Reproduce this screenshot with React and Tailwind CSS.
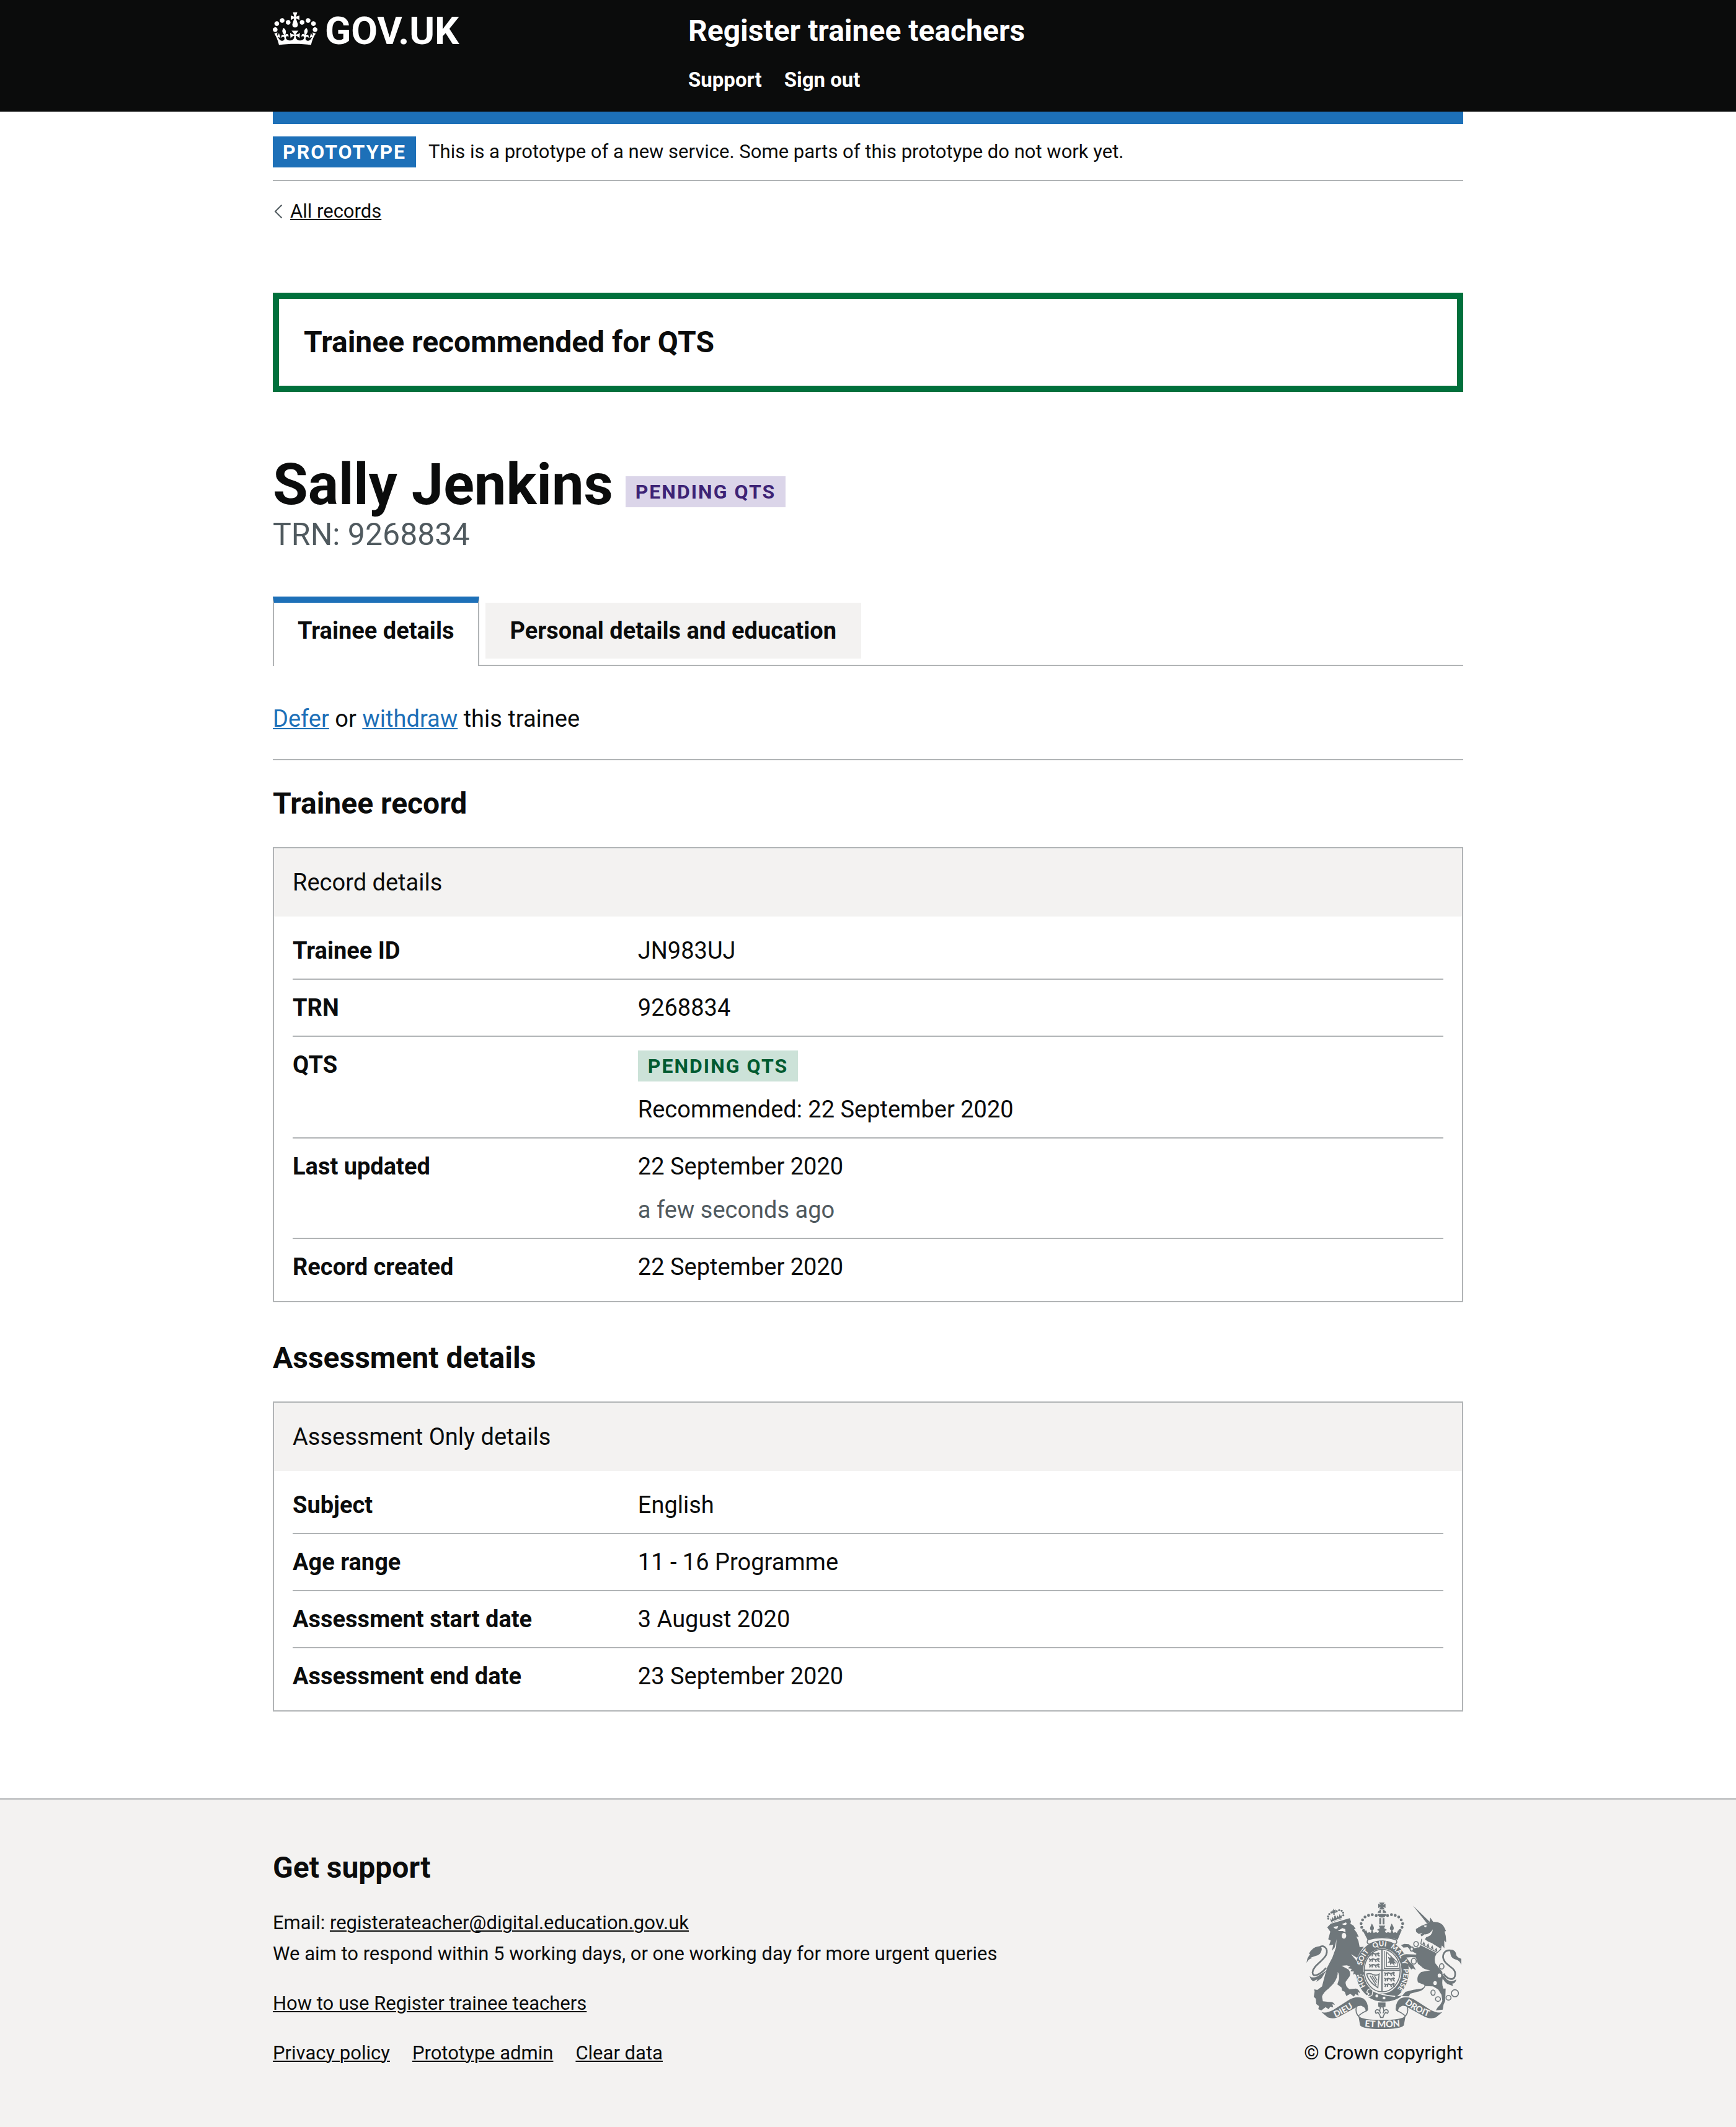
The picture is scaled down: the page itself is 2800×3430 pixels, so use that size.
const recordRows = [
  { key: "Trainee ID", value: "JN983UJ" },
  { key: "TRN", value: "9268834" },
  { key: "QTS", tag: "Pending QTS", note: "Recommended: 22 September 2020" },
  { key: "Last updated", value: "22 September 2020", hint: "a few seconds ago" },
  { key: "Record created", value: "22 September 2020" },
];

const assessmentRows = [
  { key: "Subject", value: "English" },
  { key: "Age range", value: "11 - 16 Programme" },
  { key: "Assessment start date", value: "3 August 2020" },
  { key: "Assessment end date", value: "23 September 2020" },
];

const underlined = "underline decoration-2 underline-offset-2";

function Container({ className = "", children }) {
  return <div className={`mx-auto w-full max-w-[1920px] ${className}`}>{children}</div>;
}

function CrownLogo() {
  return (
    <svg aria-hidden="true" viewBox="0 0 132 97" className="h-[53px] w-[72px] shrink-0" fill="currentColor" fillRule="evenodd">
      <path d="M25 30.2c3.5 1.5 7.7-.2 9.1-3.7 1.5-3.6-.2-7.8-3.9-9.2-3.6-1.4-7.6.3-9.1 3.9-1.4 3.5.3 7.5 3.9 9zM9 39.5c3.6 1.5 7.8-.2 9.2-3.7 1.5-3.6-.2-7.8-3.9-9.1-3.6-1.5-7.6.2-9.1 3.8-1.4 3.5.3 7.5 3.8 9zM4.4 57.2c3.5 1.5 7.7-.2 9.1-3.8 1.5-3.6-.2-7.7-3.9-9.1-3.5-1.5-7.6.3-9.1 3.8-1.4 3.5.3 7.6 3.9 9.1zm38.3-21.4c3.5 1.5 7.7-.2 9.1-3.8 1.5-3.6-.2-7.7-3.9-9.1-3.6-1.5-7.6.3-9.1 3.8-1.3 3.6.4 7.7 3.9 9.1zm64.4-5.6c-3.6 1.5-7.8-.2-9.1-3.7-1.5-3.6.2-7.8 3.8-9.2 3.6-1.4 7.7.3 9.2 3.9 1.3 3.5-.4 7.5-3.9 9zm15.9 9.3c-3.6 1.5-7.7-.2-9.1-3.7-1.5-3.6.2-7.8 3.7-9.1 3.6-1.5 7.7.2 9.2 3.8 1.5 3.5-.3 7.5-3.8 9zm4.7 17.7c-3.6 1.5-7.8-.2-9.2-3.8-1.5-3.6.2-7.7 3.9-9.1 3.6-1.5 7.7.3 9.2 3.8 1.3 3.5-.4 7.6-3.9 9.1zM89.3 35.8c-3.6 1.5-7.8-.2-9.2-3.8-1.4-3.6.2-7.7 3.9-9.1 3.6-1.5 7.7.3 9.2 3.8 1.4 3.6-.3 7.7-3.9 9.1zM69.7 17.7l8.9 4.7V9.3l-8.9 2.8c-.2-.3-.5-.6-.9-.9L72.4 0H59.6l3.5 11.2c-.3.3-.6.5-.9.9l-8.8-2.8v13.1l8.8-4.7c.3.3.6.7.9.9l-5 15.4v.1c-.2.8-.4 1.6-.4 2.4 0 4.1 3.1 7.5 7 8.1h.2c.3 0 .7.1 1 .1.4 0 .7 0 1-.1h.2c4-.6 7.1-4.1 7.1-8.1 0-.8-.1-1.7-.4-2.4V34l-5.1-15.4c.4-.2.7-.6 1-.9zM66 92.8c16.9 0 32.8 1.1 47.1 3.2 4-16.9 8.9-26.7 14-33.5l-9.6-3.4c1 4.9 1.1 7.2 0 10.2-1.5-1.4-3-4.3-4.2-8.7L108.6 76c2.8-2 5-3.2 7.5-3.3-4.4 9.4-10 11.9-13.6 11.2-4.3-.8-6.3-4.6-5.6-7.9 1-4.7 5.7-5.9 8-.5 4.3-8.7-3-11.4-7.6-8.8 7.1-7.2 7.9-13.5 2.1-21.1-8 6.1-8.1 12.3-4.5 20.8-4.7-5.4-12.1-2.5-9.5 6.2 3.4-5.2 7.9-2 7.2 3.1-.6 4.3-6.4 7.8-13.5 7.2-10.3-.9-10.9-8-11.2-13.8 2.5-.5 7.1 1.8 11 7.3L80.2 60c-4.1 4.4-8 5.3-12.3 5.4 1.4-4.4 8-11.6 8-11.6H55.5s6.4 7.2 7.9 11.6c-4.2-.1-8-1-12.3-5.4l1.4 16.4c3.9-5.5 8.5-7.7 10.9-7.3-.3 5.8-.9 12.8-11.1 13.8-7.2.6-12.9-2.9-13.5-7.2-.7-5 3.8-8.3 7.1-3.1 2.7-8.7-4.6-11.6-9.4-6.2 3.7-8.5 3.6-14.7-4.6-20.8-5.8 7.6-5 13.9 2.2 21.1-4.7-2.6-11.9.1-7.7 8.8 2.3-5.5 7.1-4.2 8.1.5.7 3.3-1.3 7.1-5.7 7.9-3.5.7-9-1.8-13.5-11.2 2.5.1 4.7 1.3 7.5 3.3l-4.7-15.4c-1.2 4.4-2.7 7.2-4.3 8.7-1.1-3-.9-5.3 0-10.2l-9.5 3.4c5 6.9 9.9 16.7 14 33.5 14.8-2.1 30.8-3.2 47.7-3.2z" />
    </svg>
  );
}

const INK = "#6f777b";
const PAPER = "#f3f2f1";

function PassantLions({ x, y }) {
  return (
    <g transform={`translate(${x} ${y})`} fill="none" stroke={INK} strokeWidth="6" strokeLinejoin="round">
      {[0, 27, 54].map((dy) => (
        <path key={dy} d={`M2 ${dy + 4}l6 8-4 8M8 ${dy + 10}l12-4 14 4 12-6 6 4M18 ${dy + 8}l-2 12M32 ${dy + 10}l4 11M46 ${dy + 6}l-2 8 8 6`} />
      ))}
    </g>
  );
}

function RoyalArms() {
  const archDots = [[470, 147], [451, 143], [433, 146], [416, 154], [404, 168], [397, 186], [400, 204], [409, 219]];
  const half = (
    <>
      <path d="M205 614Q228 622 262 604L330 560Q372 532 408 548Q432 566 430 600L420 614Q420 590 400 584Q382 582 372 592L302 630Q268 652 236 640Z" fill={INK} />
      <path d="M374 590Q366 618 390 640M404 584Q436 592 426 606Q400 618 384 632" fill="none" stroke={INK} strokeWidth="5" />
    </>
  );
  return (
    <svg role="img" aria-label="Royal coat of arms" viewBox="132 84 750 612" className="h-[204px] w-[250px]">
      <defs>
        <path id="garter" d="M500 537A102 121 0 0 1 500 295A102 121 0 0 1 500 537" />
        <path id="scroll" d="M400 682Q497 694 600 682" />
        <path id="scroll-left" d="M272 640Q325 618 385 574" />
        <path id="scroll-right" d="M608 573Q665 618 735 640" />
      </defs>

      {/* crown and orb */}
      <g fill={INK}>
        <path d="M484 84h27l-8 12 12-7v22l-12-7 8 14h-27l8-14-12 7v-22l12 7z" />
        <path d="M477 134a20 20 0 0 1 16-15v15zM502 119a20 20 0 0 1 17 15h-17zM476 139h44q-4 18-22 18t-22-18z" />
        <path d="M485 160h9v30h-9zM501 160h9v30h-9z" />
        {archDots.map(([x, y]) => (
          <g key={x}>
            <circle cx={x} cy={y} r="7" />
            <circle cx={995 - x} cy={y} r="7" />
          </g>
        ))}
        <path d="M408 226l14-8 6 14q10-8 16 0l4-14q-12-2-6-16l7-17 9 17q4 14-6 16l6 14q10-8 20 0l6-10-10-6 14-8-6-12h32l-6 12 14 8-10 6 6 10q10-8 20 0l6-14q-12-2-6-16l7-17 9 17q4 14-6 16l6 14q8-8 16 0l6-14 14 8-16 38q-74-22-146 0z" />
      </g>
      <path d="M430 264Q420 280 436 286Q498 258 560 286Q576 280 566 264Q498 244 430 264Z" fill={PAPER} stroke={INK} strokeWidth="5" />

      {/* lion */}
      <g fill={INK}>
        <path d="M233 204L250 187L342 160L348 176L345 187L360 196L371 213L363 213L376 230L386 251L374 248L384 270L390 300L410 298L392 325L378 352L348 334L372 362L388 385L402 400L410 425L402 440L396 430L390 443L382 432L374 440L368 428L358 433L362 418L345 417L352 405L332 402L344 394L328 388L302 390L336 408Q348 424 342 440L322 468Q320 490 340 503L372 500Q390 505 390 522L380 515L385 535L370 527L362 539L345 526L325 536L318 516L305 510L302 495L282 480L290 455Q292 430 284 420Q286 445 262 478L240 500Q212 520 208 540L212 562L240 565Q265 562 270 580L258 575L262 592L248 588L240 600L225 590L205 606L190 600L193 585L180 575L178 550L168 540L172 515L170 504L185 507L208 490Q218 450 232 400L258 350L276 300L278 262L270 300L256 318L262 288L242 292L250 268L238 262L248 225Z" />
        <path d="M133 376Q135 350 150 335L145 331Q160 300 190 296Q212 296 205 318Q200 338 178 342L150 352L162 352Q142 357 133 376Z" />
        <path d="M148 440Q160 452 185 442L228 414L206 450L180 468L186 455L165 465Q152 457 148 440Z" />
        <path d="M254 184L246 160l8 8 4-14 7 10 2-16h6l5 12 4-14 8 10 2-16 8 10 4-8-2 24q-26 4-46 18z" />
        {[[238, 162], [237, 151], [243, 140], [253, 132], [279, 126], [291, 121], [303, 124], [310, 133], [311, 146]].map(([x, y]) => (
          <circle key={`${x}-${y}`} cx={x} cy={y} r="5" />
        ))}
        <path d="M262 113l6 8 8-3-4 8 6 6-9 2v10h-6l-1-9-8 2 4-8-4-6 8-1z" />
      </g>
      <path d="M192 302C215 285 240 305 228 337C215 367 165 388 162 422C162 446 192 440 228 400" fill="none" stroke={INK} strokeWidth="8" />
      <path d="M250 182Q282 164 320 158" fill="none" stroke={PAPER} strokeWidth="4" />
      <g fill={PAPER}>
        <path d="M262 202l24-4-4 12q-12 4-20-8zM304 188l20-8 4 8q-10 10-24 0z" />
        <path d="M284 222l22-14 14 4 2 16-14-6z" />
        <ellipse cx="314" cy="245" rx="11" ry="14" />
      </g>

      {/* unicorn */}
      <g fill={INK}>
        <path d="M647 98L728 176L716 185Z" />
        <path d="M714 187L728 177L732 157L746 178Q784 176 798 202L808 222L801 224Q810 250 808 277L799 268L800 305L788 292L782 316L738 288L706 262L712 252Q742 246 744 214Q728 240 704 238L690 248L684 240L694 231L676 236L663 226L662 212L690 196Z" />
        <path d="M684 290L764 330Q748 350 756 378L790 420L792 450Q786 480 795 500L806 500L804 560L796 578L792 602L758 606L768 590L780 578L790 560L786 530L770 505L745 490L708 488Q700 512 660 518L635 525L628 538L594 537L612 516L650 506L690 500Q708 492 702 482L672 470Q662 440 688 420L732 412Q700 408 690 395L672 380L660 344L672 312Z" />
        <path d="M672 336L640 318L622 300L602 302L590 290L606 284L628 286L650 306L676 300Z" />
        <path d="M672 350L640 348L616 350L632 372L650 388L662 410L648 403L640 408L628 392L612 372L600 345L612 334L668 336Z" />
        <path d="M826 312Q856 310 858 340Q864 352 882 356V386Q874 364 855 360Q834 354 830 336Z" />
        <path d="M780 418L812 456Q832 472 858 456Q852 478 838 476L842 488L814 478Q790 462 780 418Z" />
      </g>
      <path d="M840 318C800 306 782 340 802 370C822 398 860 402 851 440C844 464 815 456 796 428" fill="none" stroke={INK} strokeWidth="8" />
      <path d="M690 260L686 284L766 326L784 308L738 280Z" fill={PAPER} />
      <path d="M690 260L686 284L766 326L784 308" fill="none" stroke={INK} strokeWidth="4" />
      <path d="M694 284l7-12 7 20zM714 294l8-14 6 22zM734 304l8-14 6 22zM752 314l10-12 4 18z" fill={INK} />
      <path d="M700 196l14-2-2 10q-8 2-12-8z" fill={PAPER} />
      <g fill={PAPER} stroke={INK} strokeWidth="5">
        <ellipse cx="663" cy="285" rx="11" ry="12" />
        <ellipse cx="642" cy="309" rx="8" ry="10" />
        <ellipse cx="652" cy="368" rx="12" ry="14" />
        <ellipse cx="787" cy="393" rx="11" ry="13" />
        <ellipse cx="776" cy="437" rx="11" ry="12" />
        <ellipse cx="755" cy="474" rx="11" ry="12" />
        <ellipse cx="745" cy="520" rx="10" ry="13" />
        <ellipse cx="769" cy="551" rx="12" ry="11" />
        <ellipse cx="820" cy="545" rx="12" ry="11" />
        <circle cx="851" cy="523" r="17" />
      </g>

      {/* garter */}
      <path fillRule="evenodd" fill={INK} d="M500 268A128 147 0 0 1 500 562A128 147 0 0 1 374 440L386 443L396 434L410 440L412 425L376 362A128 147 0 0 1 500 268ZM500 306A93 109 0 0 0 500 524A93 109 0 0 0 500 306Z" />
      <ellipse cx="499" cy="413" rx="87" ry="103" fill="none" stroke={INK} strokeWidth="5" />
      <path d="M498 310v206M412 412h175" stroke={INK} strokeWidth="6" />
      <PassantLions x="434" y="324" />
      <PassantLions x="508" y="418" />
      <path d="M509 318v85h72M520 324l52 50v20h-52z" fill="none" stroke={INK} strokeWidth="4" />
      <path d="M526 346l12 6 4-12 6 12 12 6-4 8 12 14-12-2 4 12-14-12-8 8-2-12-12 2 10-10z" fill={INK} />
      <path d="M424 430Q440 424 458 434Q474 438 484 430L478 496L470 490Q444 474 428 444Z M440 438L470 484M450 438L472 472M462 440L474 460" fill="none" stroke={INK} strokeWidth="5" />
      <path d="M422 498Q462 540 530 536Q570 540 596 534Q560 566 500 563Q460 562 430 540Z" fill={INK} />
      <path d="M452 510Q490 532 562 538" fill="none" stroke={PAPER} strokeWidth="5" />
      <path d="M430 506q14-10 24 4l-4 22q-14 12-24 2l10-8-12-8z" fill={INK} stroke={PAPER} strokeWidth="4" />
      <circle cx="473" cy="536" r="7" fill={PAPER} />
      <circle cx="508" cy="546" r="7" fill={PAPER} />

      {/* scroll */}
      {half}
      <g transform="translate(995 0) scale(-1 1)">{half}</g>
      <path d="M384 632Q400 652 497 652Q595 652 612 632L604 678Q590 696 497 696Q405 696 392 678Z" fill={INK} />
      <path d="M480 568h35v20q-6-2-8 6l-10-14-10 14q-2-8-7-6z" fill={INK} />
      <path d="M497 584q16 18 6 36q4-18 18-18q12 6 4 18l-10-4-8 12-4 12h-12l-4-12-8-12-10 4q-8-12 4-18q14 0 18 18q-10-18 6-36z" fill={PAPER} stroke={INK} strokeWidth="5" />

      <g fill={PAPER} className="font-[Lato,sans-serif] font-black">
        <text className="text-[34px]"><textPath href="#garter" startOffset="98">HO</textPath></text>
        <text className="text-[34px]"><textPath href="#garter" startOffset="202">SOIT</textPath></text>
        <text className="text-[34px]"><textPath href="#garter" startOffset="306">QUI</textPath></text>
        <text className="text-[34px]"><textPath href="#garter" startOffset="390">MAL</textPath></text>
        <text className="text-[34px]"><textPath href="#garter" startOffset="474">Y</textPath></text>
        <text className="text-[34px]"><textPath href="#garter" startOffset="514">PENSE</textPath></text>
        <text className="text-[42px]"><textPath href="#scroll-left">DIEU</textPath></text>
        <text className="text-[44px]"><textPath href="#scroll" startOffset="14">ET MON</textPath></text>
        <text className="text-[42px]"><textPath href="#scroll-right">DROIT</textPath></text>
      </g>
    </svg>
  );
}

function Header() {
  return (
    <header className="bg-[#0b0c0c] text-white">
      <Container className="flex h-[180px] items-start pt-5">
        <div className="w-[670px] shrink-0">
          <a href="#home" className="flex items-start gap-3 text-[62px] leading-[60px] font-bold">
            <CrownLogo />
            <span>GOV.UK</span>
          </a>
        </div>
        <div className="flex flex-col gap-6">
          <a href="#service" className="text-5xl leading-[60px] font-bold">Register trainee teachers</a>
          <nav aria-label="Account" className="flex gap-9 text-[33px] leading-[50px] font-bold">
            <a href="#support">Support</a>
            <a href="#sign-out">Sign out</a>
          </nav>
        </div>
      </Container>
    </header>
  );
}

function Tag({ className, children }) {
  return (
    <strong className={`inline-block px-4 text-[32px] leading-[50px] font-bold tracking-[2px] uppercase ${className}`}>
      {children}
    </strong>
  );
}

function SummaryCard({ title, rows }) {
  return (
    <section className="border-2 border-[#b1b4b6]">
      <h3 className="bg-[#f3f2f1] p-[30px] leading-[50px]">{title}</h3>
      <dl className="px-[30px] py-2.5">
        {rows.map((row) => (
          <div key={row.key} className="flex border-b-2 border-[#b1b4b6] py-5 last:border-b-0">
            <dt className="w-[30%] font-bold">{row.key}</dt>
            <dd className="flex flex-1 flex-col items-start gap-5">
              {row.tag && <Tag className="mt-0.5 bg-[#cce2d8] text-[#005a30]">{row.tag}</Tag>}
              {row.value && <p>{row.value}</p>}
              {row.note && <p>{row.note}</p>}
              {row.hint && <p className="text-[#505a5f]">{row.hint}</p>}
            </dd>
          </div>
        ))}
      </dl>
    </section>
  );
}

function Footer() {
  return (
    <footer className="border-t-2 border-[#b1b4b6] bg-[#f3f2f1] text-[31px] leading-[50px]">
      <Container className="flex items-end justify-between pt-20 pb-[94px]">
        <div>
          <h2 className="mb-[34px] text-5xl leading-[60px] font-bold">Get support</h2>
          <p>Email: <a href="mailto:registerateacher@digital.education.gov.uk" className={underlined}>registerateacher@digital.education.gov.uk</a></p>
          <p>We aim to respond within 5 working days, or one working day for more urgent queries</p>
          <p className="my-[30px]"><a href="#guide" className={underlined}>How to use Register trainee teachers</a></p>
          <ul className="flex gap-9">
            <li><a href="#privacy" className={underlined}>Privacy policy</a></li>
            <li><a href="#admin" className={underlined}>Prototype admin</a></li>
            <li><a href="#clear" className={underlined}>Clear data</a></li>
          </ul>
        </div>
        <a href="#copyright" className="flex flex-col items-center gap-3.5">
          <RoyalArms />
          <span>© Crown copyright</span>
        </a>
      </Container>
    </footer>
  );
}

export default function App() {
  return (
    <div className="bg-white font-[Roboto,sans-serif] text-[38px] leading-[50px] text-[#0b0c0c]">
      <Header />
      <Container className="pb-[140px]">
        <div className="h-5 bg-[#1d70b8]" />
        <div className="flex items-center gap-5 border-b-2 border-[#b1b4b6] py-5 text-[31px] leading-[50px]">
          <Tag className="bg-[#1d70b8] text-white">Prototype</Tag>
          <span>This is a prototype of a new service. Some parts of this prototype do not work yet.</span>
        </div>
        <a href="#records" className="mt-6 flex w-fit items-center gap-3 text-[31px] leading-[50px]">
          <svg aria-hidden="true" viewBox="0 0 16 24" className="h-6 w-4" fill="none" stroke="#505a5f" strokeWidth="2">
            <path d="M14.500 1.500L4 12l10.500 10.500" />
          </svg>
          <span className={underlined}>All records</span>
        </a>

        <main className="pt-[106px]">
          <div role="alert" className="border-[10px] border-[#00703c] p-10">
            <h2 className="text-5xl leading-[60px] font-bold">Trainee recommended for QTS</h2>
          </div>

          <div className="mt-[100px] flex items-start gap-5">
            <h1 className="text-[92px] leading-[100px] font-bold">Sally Jenkins</h1>
            <Tag className="mt-9 bg-[#dbd5e9] text-[#3d2375]">Pending QTS</Tag>
          </div>
          <p className="text-[50px] leading-[60px] text-[#505a5f]">TRN: 9268834</p>

          <nav aria-label="Trainee" className="mt-[70px] flex items-start gap-2.5 border-b-2 border-[#b1b4b6] font-bold">
            <a href="#details" aria-current="page" className="-mb-0.5 border-x-2 border-t-10 border-x-[#b1b4b6] border-t-[#1d70b8] bg-white px-[38px] pt-5 pb-8">Trainee details</a>
            <a href="#personal" className="mt-2.5 bg-[#f3f2f1] px-10 py-5">Personal details and education</a>
          </nav>

          <p className="mt-[60px] border-b-2 border-[#b1b4b6] pb-10">
            <a href="#defer" className={`text-[#1d70b8] ${underlined}`}>Defer</a> or{" "}
            <a href="#withdraw" className={`text-[#1d70b8] ${underlined}`}>withdraw</a> this trainee
          </p>

          <h2 className="my-10 text-5xl leading-[60px] font-bold">Trainee record</h2>
          <SummaryCard title="Record details" rows={recordRows} />
          <h2 className="mt-[60px] mb-10 text-5xl leading-[60px] font-bold">Assessment details</h2>
          <SummaryCard title="Assessment Only details" rows={assessmentRows} />
        </main>
      </Container>
      <Footer />
    </div>
  );
}
